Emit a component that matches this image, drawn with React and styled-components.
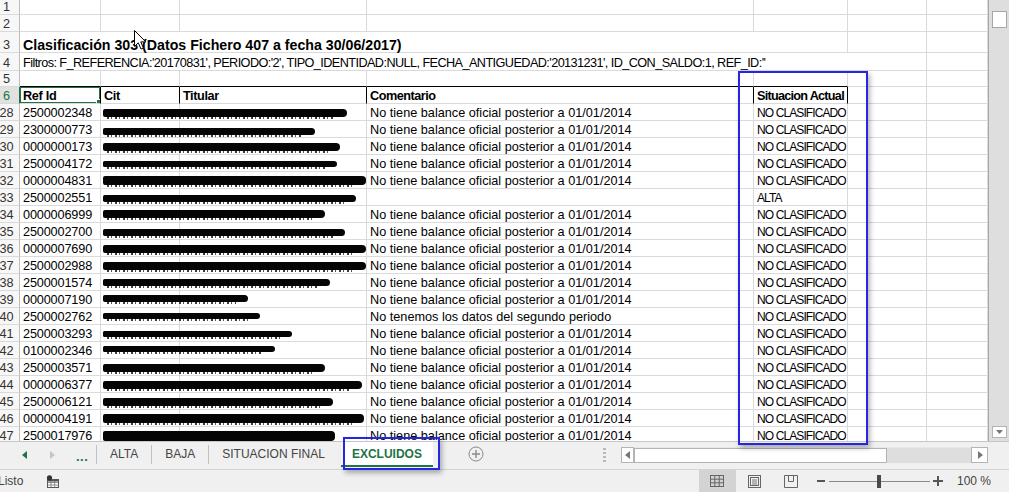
import React from "react";
import styled, { createGlobalStyle } from "styled-components";

const GlobalStyle = createGlobalStyle`
  html, body {
    margin: 0;
    padding: 0;
    background: #fff;
  }
  body {
    font-family: "Liberation Sans", Arial, sans-serif;
    overflow: hidden;
  }
`;

const COLS = "20px 81px 79px 187px 387px 94px 79px 61px";
const GRID = "#dadada";
const GREEN = "#217346";

const Window = styled.div`
  position: relative;
  width: 1009px;
  height: 492px;
  display: flex;
  flex-direction: column;
  overflow: hidden;
  background: #fff;
`;

const Main = styled.div`
  display: flex;
  height: 441px;
`;

const Sheet = styled.div`
  position: relative;
  flex: 1;
  overflow: hidden;
`;

const Row = styled.div`
  position: relative;
  display: grid;
  grid-template-columns: ${COLS};
  height: ${(p) => p.$h || 17}px;
`;

const RowNum = styled.div`
  display: flex;
  align-items: flex-end;
  justify-content: center;
  box-sizing: border-box;
  padding-right: 6px;
  font-size: 12.7px;
  line-height: 14px;
  white-space: nowrap;
  color: ${(p) => (p.$active ? GREEN : "#333")};
  background: ${(p) => (p.$active ? "#e1e1e1" : "#f7f7f7")};
  border-right: 1px solid ${(p) => (p.$active ? GREEN : "#bdbdbd")};
  border-bottom: 1px solid ${GRID};
`;

const Cell = styled.div`
  position: relative;
  display: flex;
  align-items: flex-end;
  box-sizing: border-box;
  min-width: 0;
  padding: 0 3px;
  grid-column: ${(p) => (p.$span ? `span ${p.$span}` : "auto")};
  border-right: 1px solid ${(p) => (p.$head ? "#000" : GRID)};
  border-bottom: 1px solid ${(p) => (p.$ruled ? "#000" : GRID)};
  font-size: ${(p) => p.$size || 12.7}px;
  font-weight: ${(p) => (p.$head || p.$bold ? 700 : 400)};
  letter-spacing: ${(p) => p.$ls || 0}px;
  line-height: 14px;
  color: #000;
  white-space: nowrap;
  overflow: ${(p) => (p.$span ? "visible" : "hidden")};
  z-index: ${(p) => (p.$span ? 1 : 0)};
`;

const Selection = styled.div`
  position: absolute;
  left: -1px;
  top: -1px;
  right: -1px;
  bottom: -1px;
  border: 2px solid ${GREEN};
  pointer-events: none;

  &::after {
    content: "";
    position: absolute;
    right: -4px;
    bottom: -4px;
    width: 5px;
    height: 5px;
    background: ${GREEN};
    border: 1px solid #fff;
  }
`;

const Redaction = styled.span`
  position: absolute;
  left: 103px;
  top: ${(p) => p.$top}px;
  height: ${(p) => p.$h}px;
  background: #050505;
  border-radius: 2px 4px 4px 2px;
  z-index: 2;

  &::after {
    content: "";
    position: absolute;
    left: 4px;
    right: 12px;
    top: ${(p) => p.$h}px;
    height: 2px;
    background: repeating-linear-gradient(
      90deg,
      #3a3a3a 0 2px,
      transparent 2px 4px,
      #555 4px 5px,
      transparent 5px 8px
    );
  }
`;

const Callout = styled.div`
  position: absolute;
  left: ${(p) => p.$x}px;
  top: ${(p) => p.$y}px;
  width: ${(p) => p.$w}px;
  height: ${(p) => p.$hh}px;
  box-sizing: border-box;
  border: 2px solid #2626e0;
  box-shadow: 2px 3px 5px rgba(0, 0, 0, 0.3);
  pointer-events: none;
  z-index: 5;
`;

const Cursor = styled.svg`
  position: absolute;
  left: 134px;
  top: 30px;
  z-index: 6;
`;

const VScroll = styled.div`
  width: 21px;
  box-sizing: border-box;
  border-left: 1px solid #a9a9a9;
  background: #dedede;
  display: flex;
  flex-direction: column;
  justify-content: space-between;
  align-items: flex-start;
  padding: 11px 0 3px 3px;
`;

const Thumb = styled.div`
  width: 15px;
  height: 17px;
  box-sizing: border-box;
  background: #fff;
  border: 1px solid #a6a6a6;
`;

const ArrowBtn = styled.div`
  width: ${(p) => p.$w || 15}px;
  height: ${(p) => p.$h || 12}px;
  box-sizing: border-box;
  display: flex;
  align-items: center;
  justify-content: center;
  background: #fff;
  border: 1px solid #b4b4b4;
`;

const TabBar = styled.div`
  display: flex;
  align-items: flex-start;
  height: 29px;
  box-sizing: border-box;
  background: #f0f0f0;
  border-top: 1px solid #c6c6c6;
  border-bottom: 1px solid #d4d4d4;
`;

const Nav = styled.div`
  display: flex;
  align-items: center;
  gap: 21px;
  width: 96px;
  height: 25px;
  box-sizing: border-box;
  padding-left: 22px;
`;

const Dots = styled.span`
  color: ${GREEN};
  font-weight: 700;
  font-size: 13px;
  letter-spacing: 0.5px;
  margin-top: 4px;
`;

const Sep = styled.div`
  width: 1px;
  height: 19px;
  margin-top: 3px;
  background: #c2c2c2;
`;

const Tab = styled.div`
  height: 25px;
  box-sizing: border-box;
  display: flex;
  align-items: center;
  padding: 0 ${(p) => (p.$active ? 11 : 13)}px;
  margin-left: ${(p) => (p.$active ? 3 : 0)}px;
  font-size: 12px;
  font-weight: ${(p) => (p.$active ? 700 : 400)};
  color: ${(p) => (p.$active ? GREEN : "#444")};
  background: ${(p) => (p.$active ? "#fff" : "transparent")};
  border-bottom: 2px solid ${(p) => (p.$active ? GREEN : "transparent")};
`;

const AddSheet = styled.svg`
  margin: 4px 0 0 35px;
`;

const Splitter = styled.div`
  margin: 6px 0 0 auto;
  width: 3px;
  height: 14px;
  background: repeating-linear-gradient(180deg, #b8b8b8 0 2px, transparent 2px 4px);
`;

const HScroll = styled.div`
  display: flex;
  margin: 5px 21px 0 15px;
  width: 367px;
  height: 16px;
`;

const Track = styled.div`
  flex: 1;
  display: flex;
  background: #dedede;
  border-top: 1px solid #e8e8e8;
`;

const HThumb = styled.div`
  width: 253px;
  box-sizing: border-box;
  background: #fff;
  border: 1px solid #b4b4b4;
`;

const StatusBar = styled.div`
  display: flex;
  align-items: center;
  height: 22px;
  background: #f0f0f0;
  font-size: 12px;
  color: #444;
`;

const Ready = styled.span`
  margin-left: -2px;
  width: 48px;
`;

const Views = styled.div`
  display: flex;
  height: 100%;
  margin-left: auto;
`;

const ViewBtn = styled.div`
  width: 37px;
  display: flex;
  align-items: center;
  justify-content: center;
  background: ${(p) => (p.$on ? "#d3d3d3" : "transparent")};
`;

const Zoom = styled.div`
  display: flex;
  align-items: center;
  margin-left: 7px;
`;

const ZoomTrack = styled.div`
  position: relative;
  width: 101px;
  height: 1px;
  margin: 0 3px 0 4px;
  background: #8a8a8a;
`;

const ZoomKnob = styled.span`
  position: absolute;
  left: 48px;
  top: -6px;
  width: 4px;
  height: 13px;
  background: #4a4a4a;
`;

const ZoomLabel = styled.span`
  margin: 0 18px 0 14px;
`;

const C1 = "No tiene balance oficial posterior a 01/01/2014";
const C2 = "No tenemos los datos del segundo periodo";

const rows = [
  { n: 28, id: "2500002348", bar: 347, top: 5, h: 8 },
  { n: 29, id: "2300000773", bar: 315, top: 7, h: 7 },
  { n: 30, id: "0000000173", bar: 340, top: 5, h: 8 },
  { n: 31, id: "2500004172", bar: 337, top: 6, h: 6 },
  { n: 32, id: "0000004831", bar: 366, top: 4, h: 9 },
  { n: 33, id: "2500002551", bar: 356, top: 6, h: 7, c: "", s: "ALTA" },
  { n: 34, id: "0000006999", bar: 325, top: 4, h: 8 },
  { n: 35, id: "2500002700", bar: 345, top: 6, h: 7 },
  { n: 36, id: "0000007690", bar: 366, top: 5, h: 8 },
  { n: 37, id: "2500002988", bar: 366, top: 5, h: 8 },
  { n: 38, id: "2500001574", bar: 330, top: 5, h: 7 },
  { n: 39, id: "0000007190", bar: 248, top: 4, h: 7 },
  { n: 40, id: "2500002762", bar: 260, top: 5, h: 6, c: C2 },
  { n: 41, id: "2500003293", bar: 292, top: 6, h: 6 },
  { n: 42, id: "0100002346", bar: 275, top: 4, h: 6 },
  { n: 43, id: "2500003571", bar: 325, top: 5, h: 8 },
  { n: 44, id: "0000006377", bar: 362, top: 5, h: 8 },
  { n: 45, id: "2500006121", bar: 333, top: 5, h: 8 },
  { n: 46, id: "0000004191", bar: 364, top: 4, h: 9 },
  { n: 47, id: "2500017976", bar: 335, top: 4, h: 10 },
];

const EmptyRow = ({ n, h, ruled }) => (
  <Row $h={h}>
    <RowNum>{n}</RowNum>
    {[0, 1, 2, 3, 4].map((i) => (
      <Cell key={i} $ruled={ruled} />
    ))}
    <Cell />
    <Cell />
  </Row>
);

const Tri = ({ dir, color }) => (
  <svg width="6" height="8" viewBox="0 0 6 8">
    <path d={dir === "left" ? "M5 0 L0 4 L5 8 Z" : "M1 0 L6 4 L1 8 Z"} fill={color} />
  </svg>
);

export default function App() {
  return (
    <Window>
      <GlobalStyle />
      <Main>
        <Sheet>
          <EmptyRow n={1} h={15} />
          <EmptyRow n={2} h={17} />
          <Row $h={21}>
            <RowNum>3</RowNum>
            <Cell $span={4} $bold $size={14.2} style={{ borderRight: "none" }}>
              Clasificación 303 (Datos Fichero 407 a fecha 30/06/2017)
            </Cell>
            <Cell />
            <Cell />
            <Cell />
          </Row>
          <Row $h={18}>
            <RowNum>4</RowNum>
            <Cell $span={5} $ls={-0.58} style={{ borderRight: "none" }}>
              Filtros: F_REFERENCIA:'20170831', PERIODO:'2', TIPO_IDENTIDAD:NULL,
              FECHA_ANTIGUEDAD:'20131231', ID_CON_SALDO:1, REF_ID:''
            </Cell>
            <Cell />
            <Cell />
          </Row>
          <EmptyRow n={5} h={16} ruled />
          <Row $h={17}>
            <RowNum $active>6</RowNum>
            <Cell $head $ls={-0.3}>
              Ref Id
              <Selection />
            </Cell>
            <Cell $head $ls={-0.3}>Cit</Cell>
            <Cell $head $ls={-0.4}>Titular</Cell>
            <Cell $head $ls={-0.5}>Comentario</Cell>
            <Cell $head $ls={-0.75}>Situacion Actual</Cell>
            <Cell />
            <Cell />
          </Row>
          {rows.map((r) => (
            <Row key={r.n}>
              <RowNum>{r.n}</RowNum>
              <Cell $ls={-0.15}>{r.id}</Cell>
              <Cell />
              <Cell />
              <Cell>{r.c === undefined ? C1 : r.c}</Cell>
              <Cell $ls={-0.9} $size={12}>{r.s || "NO CLASIFICADO"}</Cell>
              <Cell />
              <Cell />
              <Redaction $top={r.top} $h={r.h} style={{ width: r.bar - 103 }} />
            </Row>
          ))}
          <Cursor width="13" height="21" viewBox="0 0 13 21">
            <path
              d="M0.5 0.5 L0.5 16.5 L4.3 12.8 L7 19 L9.4 18 L6.8 11.9 L11.8 11.9 Z"
              fill="#fff"
              stroke="#000"
              strokeWidth="1"
              strokeLinejoin="round"
            />
          </Cursor>
        </Sheet>
        <VScroll>
          <Thumb />
          <ArrowBtn>
            <svg width="7" height="4" viewBox="0 0 7 4">
              <path d="M0 0 H7 L3.5 4 Z" fill="#777" />
            </svg>
          </ArrowBtn>
        </VScroll>
      </Main>

      <TabBar>
        <Nav>
          <Tri dir="left" color={GREEN} />
          <Tri dir="right" color="#c4c4c4" />
          <Dots>...</Dots>
        </Nav>
        <Sep />
        <Tab>ALTA</Tab>
        <Sep />
        <Tab>BAJA</Tab>
        <Sep />
        <Tab>SITUACION FINAL</Tab>
        <Tab $active>EXCLUIDOS</Tab>
        <AddSheet width="16" height="16" viewBox="0 0 16 16">
          <circle cx="8" cy="8" r="7" fill="none" stroke="#8a8a8a" strokeWidth="1" />
          <path d="M8 4 V12 M4 8 H12" stroke="#8a8a8a" strokeWidth="1.4" />
        </AddSheet>
        <Splitter />
        <HScroll>
          <ArrowBtn $w={13} $h={16}>
            <Tri dir="left" color="#777" />
          </ArrowBtn>
          <Track>
            <HThumb />
          </Track>
          <ArrowBtn $w={17} $h={16}>
            <Tri dir="right" color="#777" />
          </ArrowBtn>
        </HScroll>
      </TabBar>

      <StatusBar>
        <Ready>Listo</Ready>
        <svg width="13" height="13" viewBox="0 0 13 13">
          <rect x="1.5" y="4.5" width="11" height="8" fill="#fff" stroke="#555" />
          <path d="M1.5 7.5 H12.5 M1.5 10 H12.5 M5 4.5 V12.5 M8.7 4.5 V12.5" stroke="#777" strokeWidth="0.8" />
          <rect x="1.5" y="4.5" width="11" height="2" fill="#555" />
          <circle cx="3.5" cy="2.8" r="2.6" fill="#333" />
        </svg>
        <Views>
          <ViewBtn $on>
            <svg width="14" height="12" viewBox="0 0 14 12">
              <rect x="0.5" y="0.5" width="13" height="11" fill="none" stroke="#666" />
              <path d="M4.8 0.5 V11.5 M9.2 0.5 V11.5 M0.5 4.2 H13.5 M0.5 7.8 H13.5" stroke="#666" />
            </svg>
          </ViewBtn>
          <ViewBtn>
            <svg width="13" height="13" viewBox="0 0 13 13">
              <rect x="0.5" y="0.5" width="12" height="12" fill="none" stroke="#666" />
              <rect x="2.5" y="2.5" width="8" height="8" fill="none" stroke="#666" />
              <path d="M4 5 H9 M4 7 H9 M4 9 H9" stroke="#666" strokeWidth="0.9" />
            </svg>
          </ViewBtn>
          <ViewBtn>
            <svg width="14" height="13" viewBox="0 0 14 13">
              <path d="M0.5 0.5 H13.5 V12.5 H0.5 Z M4.5 0.5 V6.5 H9.5 V0.5" fill="none" stroke="#666" />
            </svg>
          </ViewBtn>
          <Zoom>
            <svg width="8" height="3" viewBox="0 0 8 3">
              <rect x="0" y="0" width="8" height="2" fill="#555" />
            </svg>
            <ZoomTrack>
              <ZoomKnob />
            </ZoomTrack>
            <svg width="10" height="10" viewBox="0 0 10 10">
              <path d="M5 0 V10 M0 5 H10" stroke="#555" strokeWidth="2" />
            </svg>
          </Zoom>
          <ZoomLabel as="div" style={{ alignSelf: "center" }}>100 %</ZoomLabel>
        </Views>
      </StatusBar>

      <Callout $x={738} $y={71} $w={130} $hh={374} />
      <Callout $x={343} $y={437} $w={97} $hh={33} />
    </Window>
  );
}
